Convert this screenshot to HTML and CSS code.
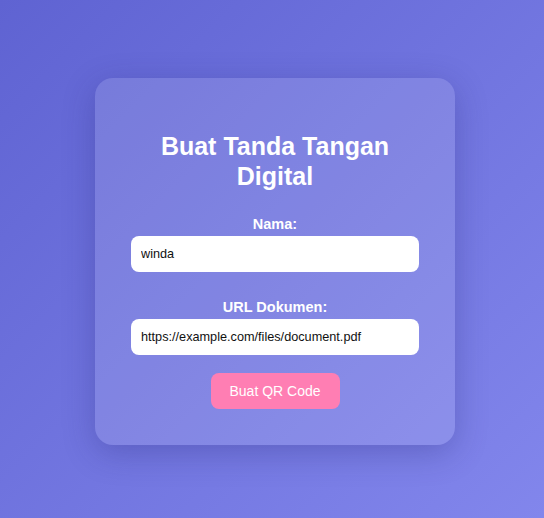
FILE: index.html
```html
<!DOCTYPE html>
<html>
<head>
<meta charset="utf-8">
<link rel="stylesheet" href="styles.css">
</head>
<body>
<div class="card">
  <h2 class="title">Buat Tanda Tangan Digital</h2>
  <form class="form">
    <label class="label" for="nama">Nama:</label>
    <input class="input" id="nama" type="text" value="winda">
    <label class="label second" for="url">URL Dokumen:</label>
    <input class="input" id="url" type="text" value="https://example.com/files/document.pdf">
    <button class="btn" type="button">Buat QR Code</button>
  </form>
</div>
</body>
</html>
```
FILE: styles.css
```css
html, body { margin: 0; padding: 0; }
body {
  font-family: "Liberation Sans", Arial, sans-serif;
  background: linear-gradient(135deg, #5f63d2 0%, #8286ec 100%);
  display: flex;
  align-items: center;
  justify-content: center;
  height: 518px;
  box-sizing: border-box;
  padding: 5px 0 0 6px;
}
.card {
  width: 360px;
  box-sizing: border-box;
  padding: 36px;
  border-radius: 18px;
  background: rgba(255,255,255,0.12);
  box-shadow: 0 8px 32px rgba(40,40,120,0.3);
  display: flex;
  flex-direction: column;
  align-items: center;
}
.title {
  margin: 17px 0 25px;
  font-size: 25px;
  line-height: 30px;
  font-weight: bold;
  color: #fff;
  text-align: center;
  padding: 0 20px;
}
.form { display: flex; flex-direction: column; align-items: center; width: 100%; }
.label {
  font-size: 14.5px;
  line-height: 16px;
  font-weight: bold;
  color: #fff;
  margin-bottom: 4px;
}
.label.second { margin-top: 27px; }
.input {
  width: 100%;
  box-sizing: border-box;
  height: 36px;
  border: none;
  border-radius: 8px;
  padding: 0 10px;
  font-family: "Liberation Sans", Arial, sans-serif;
  font-size: 12.7px;
  color: #111;
  background: #fff;
  outline: none;
}
.btn {
  margin-top: 18px;
  width: 129px;
  height: 36px;
  border: none;
  border-radius: 8px;
  background: #ff7eb3;
  color: #fff;
  font-family: "Liberation Sans", Arial, sans-serif;
  font-size: 14px;
}
```
